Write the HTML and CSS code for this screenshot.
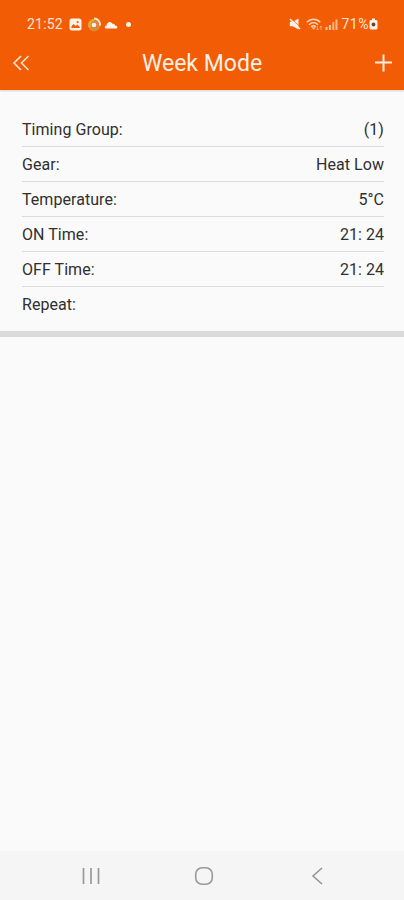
FILE: index.html
```html
<!DOCTYPE html>
<html lang="en">
<head>
<meta charset="utf-8">
<title>Week Mode</title>
<link rel="stylesheet" href="styles.css">
</head>
<body>
<header class="header">
  <div class="status">
    <div class="status-left">
      <span class="clock">21:52</span>
      <svg class="photo" width="13" height="13" viewBox="0 0 13 13"><rect x=".5" y=".5" width="12" height="12" rx="2.5" fill="#fff3e8"/><path d="M2.500 10V8l2.200-2 2 2 1.600-1.400L10.800 9v1z" fill="#f25c05"/><circle cx="8.700" cy="4" r="1.100" fill="#f25c05"/></svg>
      <svg class="ball" width="15" height="15" viewBox="0 0 15 15"><circle cx="7" cy="8" r="6.300" fill="#d98a35"/><path d="M7 2a6 6 0 0 0-5 9l4-2z" fill="#e7a928"/><path d="M7 1.500a6 6 0 0 1 6 7" fill="none" stroke="#ffe3cf" stroke-width="1.800"/><circle cx="7.300" cy="8" r="3.200" fill="#e77a42"/><circle cx="7" cy="8" r="2.300" fill="#fff5ea"/></svg>
      <svg class="cloud" width="14" height="9" viewBox="0 0 14 9"><path d="M2.500 8.500C.5 8.500 0 6 2.500 5.400 3 2 6.600.8 8.400 3.800c1.700-.3 2.500.6 2.600 1.700C14 5.600 14 8.500 12 8.500z" fill="#fff5eb"/></svg>
      <span class="dot"></span>
    </div>
    <div class="status-right">
      <svg class="mute" width="12" height="12" viewBox="0 0 12 12"><path d="M.8 3.800h3L9.500.5v11L3.800 8.200H.8z" fill="#fff0e3"/><path d="M3 .8l9 9" stroke="#f25c05" stroke-width=".8"/><path d="M1 1l10 10" stroke="#fff0e3" stroke-width="1.500"/></svg>
      <svg class="wifi" width="17" height="13" viewBox="0 0 17 13"><g fill="none" stroke="#ffd9bd" stroke-width="1.500"><path d="M.8 4.300c3.900-4 9.600-4 13.400 0M3 6.700c2.700-2.600 6.300-2.600 9 0M5.200 8.900c1.500-1.400 3.100-1.400 4.600 0"/></g><path d="M5.800 9.500h3.600l-1.800 2.300z" fill="#ffd9bd"/><path d="M11.500 8v4m-1.200-1.200 1.200 1.200 1.200-1.200M15 12V8m-1.200 1.200L15 8l1.200 1.200" stroke="#ffc49c" stroke-width=".7" fill="none"/></svg>
      <svg class="signal" width="13" height="11" viewBox="0 0 13 11"><path d="M.5 8h2v3h-2zM3.900 6h2v5h-2z" fill="#ffc7a1"/><path d="M7.300 3h2v8h-2zM10.500.5h2V11h-2z" fill="#fcb78c"/></svg>
      <span class="percent">71%</span>
      <svg class="battery" width="9" height="12" viewBox="0 0 9 12"><path d="M3 .5h3V2h1q1.500 0 1.500 1.500v6.500Q8.500 11.500 7 11.500H2Q.5 11.500.5 10V3.500Q.5 2 2 2h1z" fill="#fff0e3"/><circle cx="4.500" cy="6.500" r="1.900" fill="#5c4a40"/></svg>
    </div>
  </div>
  <div class="bar">
    <svg class="back" width="18" height="16" viewBox="0 0 18 16"><path d="M9 1 2 8l7 7M16.500 1l-7 7 7 7" fill="none" stroke="#ffe6d3" stroke-width="1.600"/></svg>
    <h1 class="title">Week Mode</h1>
    <svg class="add" width="18" height="18" viewBox="0 0 18 18"><path d="M9.500 .5v17M1 8.500h17" stroke="#ffeee1" stroke-width="2"/></svg>
  </div>
</header>
<main class="content">
  <section class="group">
    <div class="row"><span>Timing Group:</span><span>(1)</span></div>
    <div class="row"><span>Gear:</span><span>Heat Low</span></div>
    <div class="row"><span>Temperature:</span><span>5°C</span></div>
    <div class="row"><span>ON Time:</span><span>21: 24</span></div>
    <div class="row"><span>OFF Time:</span><span>21: 24</span></div>
    <div class="row"><span>Repeat:</span></div>
  </section>
</main>
<nav class="nav">
  <svg width="18" height="18" viewBox="0 0 18 18"><path d="M1.500 1v16M9 1v16M16.500 1v16" stroke="#999" stroke-width="1.700"/></svg>
  <svg width="20" height="20" viewBox="0 0 20 20"><rect x="1.700" y="1.700" width="16.600" height="16.600" rx="6.500" fill="none" stroke="#999" stroke-width="1.600"/></svg>
  <svg width="18" height="18" viewBox="0 0 18 18"><path d="M14 1 5 9l9 8" fill="none" stroke="#929292" stroke-width="1.500"/></svg>
</nav>
</body>
</html>
```
FILE: styles.css
```css
* { box-sizing: border-box; }
body {
  margin: 0;
  height: 900px;
  display: flex;
  flex-direction: column;
  overflow: hidden;
  background: #fafafa;
  color: #303030;
  font-family: Roboto, sans-serif;
}
svg { display: block; flex: none; }
.header {
  height: 90px;
  flex: none;
  background: #f25c05;
  box-shadow: 0 1px 2px #d8d0cc;
}
.status {
  height: 36px;
  padding: 12px 26px 0 27px;
  display: flex;
  justify-content: space-between;
  color: #ffe6d3;
  font-size: 14px;
}
.status-left, .status-right { display: flex; align-items: center; height: 24px; }
.clock { width: 42px; letter-spacing: .2px; }
.ball { margin-left: 5px; }
.cloud { margin-left: 2px; }
.dot { width: 5px; height: 5px; margin-left: 8px; border-radius: 50%; background: #fff3e8; }
.wifi { margin-left: 5px; }
.signal { margin-left: 2px; }
.percent { margin-left: 4px; letter-spacing: .5px; }
.bar {
  height: 54px;
  padding: 0 12px;
  display: grid;
  grid-template-columns: 18px 1fr 18px;
  align-items: center;
}
.title {
  margin: 0;
  text-align: center;
  color: #fff0e4;
  font-size: 23px;
  font-weight: 400;
}
.content { flex: 1; }
.group {
  height: 247px;
  padding: 22px 20px 0 22px;
  border-bottom: 6px solid #dadada;
}
.row {
  height: 35px;
  display: flex;
  align-items: center;
  justify-content: space-between;
  border-bottom: 1px solid #dcdcdc;
  font-size: 16px;
  letter-spacing: .05px;
}
.row:last-child { border-bottom: 0; }
.nav {
  height: 49px;
  flex: none;
  padding: 0 78px 0 82px;
  display: flex;
  align-items: center;
  justify-content: space-between;
  background: #f5f5f5;
}
```
